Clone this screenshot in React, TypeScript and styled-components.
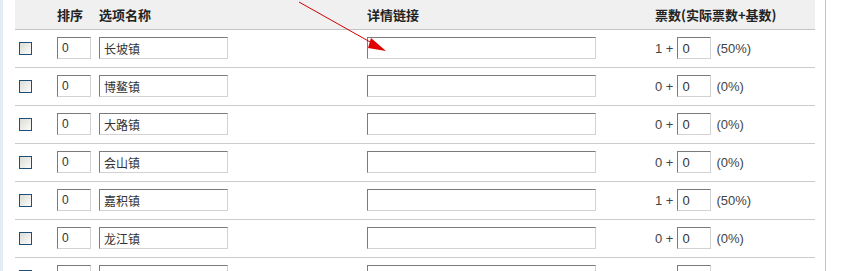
import { FC } from 'react';
import styled, { createGlobalStyle } from 'styled-components';

type Option = { name: string; votes: number; percent: string };

const options: Option[] = [
  { name: '长坡镇', votes: 1, percent: '50%' },
  { name: '博鳌镇', votes: 0, percent: '0%' },
  { name: '大路镇', votes: 0, percent: '0%' },
  { name: '会山镇', votes: 0, percent: '0%' },
  { name: '嘉积镇', votes: 1, percent: '50%' },
  { name: '龙江镇', votes: 0, percent: '0%' },
  { name: '', votes: 0, percent: '0%' }
];

const GlobalStyle = createGlobalStyle`
  html, body {
    margin: 0;
    padding: 0;
    background: #fff;
    overflow: hidden;
  }
  body {
    font-family: 'Liberation Sans', 'Noto Sans CJK SC', sans-serif;
    font-size: 12px;
    color: #333;
  }
`;

const Page = styled.div`
  display: flex;
  height: 271px;
  overflow: hidden;
`;

const SideStrip = styled.div`
  width: 3px;
  flex: none;
  background: #e3ebf5;
`;

const Content = styled.div`
  position: relative;
  flex: none;
  width: 800px;
  margin-left: 12px;
`;

const RightRule = styled.div`
  width: 1px;
  flex: none;
  margin-left: 10px;
  background: #c6c6c6;
`;

const Table = styled.table`
  width: 800px;
  border-collapse: collapse;
  table-layout: fixed;
  th,
  td {
    padding: 0;
    text-align: left;
  }
  thead tr {
    height: 29px;
    background: #f0f0f0;
    border-bottom: 1px solid #c4c4c4;
  }
  th {
    font-family: 'Noto Sans CJK SC', sans-serif;
    font-size: 13px;
    font-weight: bold;
    color: #222;
    vertical-align: middle;
  }
  tbody tr {
    height: 38px;
    border-bottom: 1px solid #cbcbcb;
  }
  td {
    vertical-align: middle;
  }
`;

const Col = styled.col<{ $w: number }>`
  width: ${p => p.$w}px;
`;

const Check = styled.input.attrs({ type: 'checkbox' })`
  appearance: none;
  display: block;
  width: 13px;
  height: 13px;
  margin: 0 0 0 4px;
  border: 1px solid #1c4f7c;
  box-sizing: border-box;
  background: linear-gradient(135deg, #dcdcd6, #fbfbf9);
`;

const TextBox = styled.input<{ $w: number }>`
  display: block;
  box-sizing: border-box;
  width: ${p => p.$w}px;
  height: 22px;
  padding: 0 0 0 4px;
  border: 1px solid;
  border-color: #7b7b7b #d2d2d2 #d2d2d2 #7b7b7b;
  font-family: 'Liberation Sans', 'Noto Sans CJK SC', sans-serif;
  font-size: 12px;
  color: #333;
  background: #fff;
  outline: none;
`;

const VoteCell = styled.div`
  display: flex;
  align-items: center;
  padding-left: 15px;
  font-size: 13px;
  color: #444;
  white-space: pre;
  ${TextBox} {
    font-size: 13px;
    margin: 0 5px 0 4px;
  }
`;

const HeadVote = styled.th`
  padding-left: 15px !important;
`;

const Arrow = styled.svg`
  position: absolute;
  left: 270px;
  top: 0;
  pointer-events: none;
`;

const Row: FC<{ option: Option }> = ({ option }) => (
  <tr>
    <td>
      <Check />
    </td>
    <td>
      <TextBox $w={34} defaultValue="0" />
    </td>
    <td>
      <TextBox $w={129} defaultValue={option.name} />
    </td>
    <td>
      <TextBox $w={229} defaultValue="" />
    </td>
    <td>
      <VoteCell>
        {option.votes} +
        <TextBox $w={34} defaultValue="0" />({option.percent})
      </VoteCell>
    </td>
  </tr>
);

const App: FC = () => (
  <>
    <GlobalStyle />
    <Page>
      <SideStrip />
      <Content>
        <Table>
          <colgroup>
            <Col $w={42} />
            <Col $w={42} />
            <Col $w={268} />
            <Col $w={273} />
            <Col $w={175} />
          </colgroup>
          <thead>
            <tr>
              <th />
              <th>排序</th>
              <th>选项名称</th>
              <th>详情链接</th>
              <HeadVote>票数(实际票数+基数)</HeadVote>
            </tr>
          </thead>
          <tbody>
            {options.map((o, i) => (
              <Row key={i} option={o} />
            ))}
          </tbody>
        </Table>
        <Arrow width="110" height="60" viewBox="0 0 110 60">
          <line x1="14" y1="2" x2="94" y2="47" stroke="#d40000" strokeWidth="1" />
          <polygon points="86,38 101,51 83,48" fill="#e00000" />
        </Arrow>
      </Content>
      <RightRule />
    </Page>
  </>
);

export default App;
